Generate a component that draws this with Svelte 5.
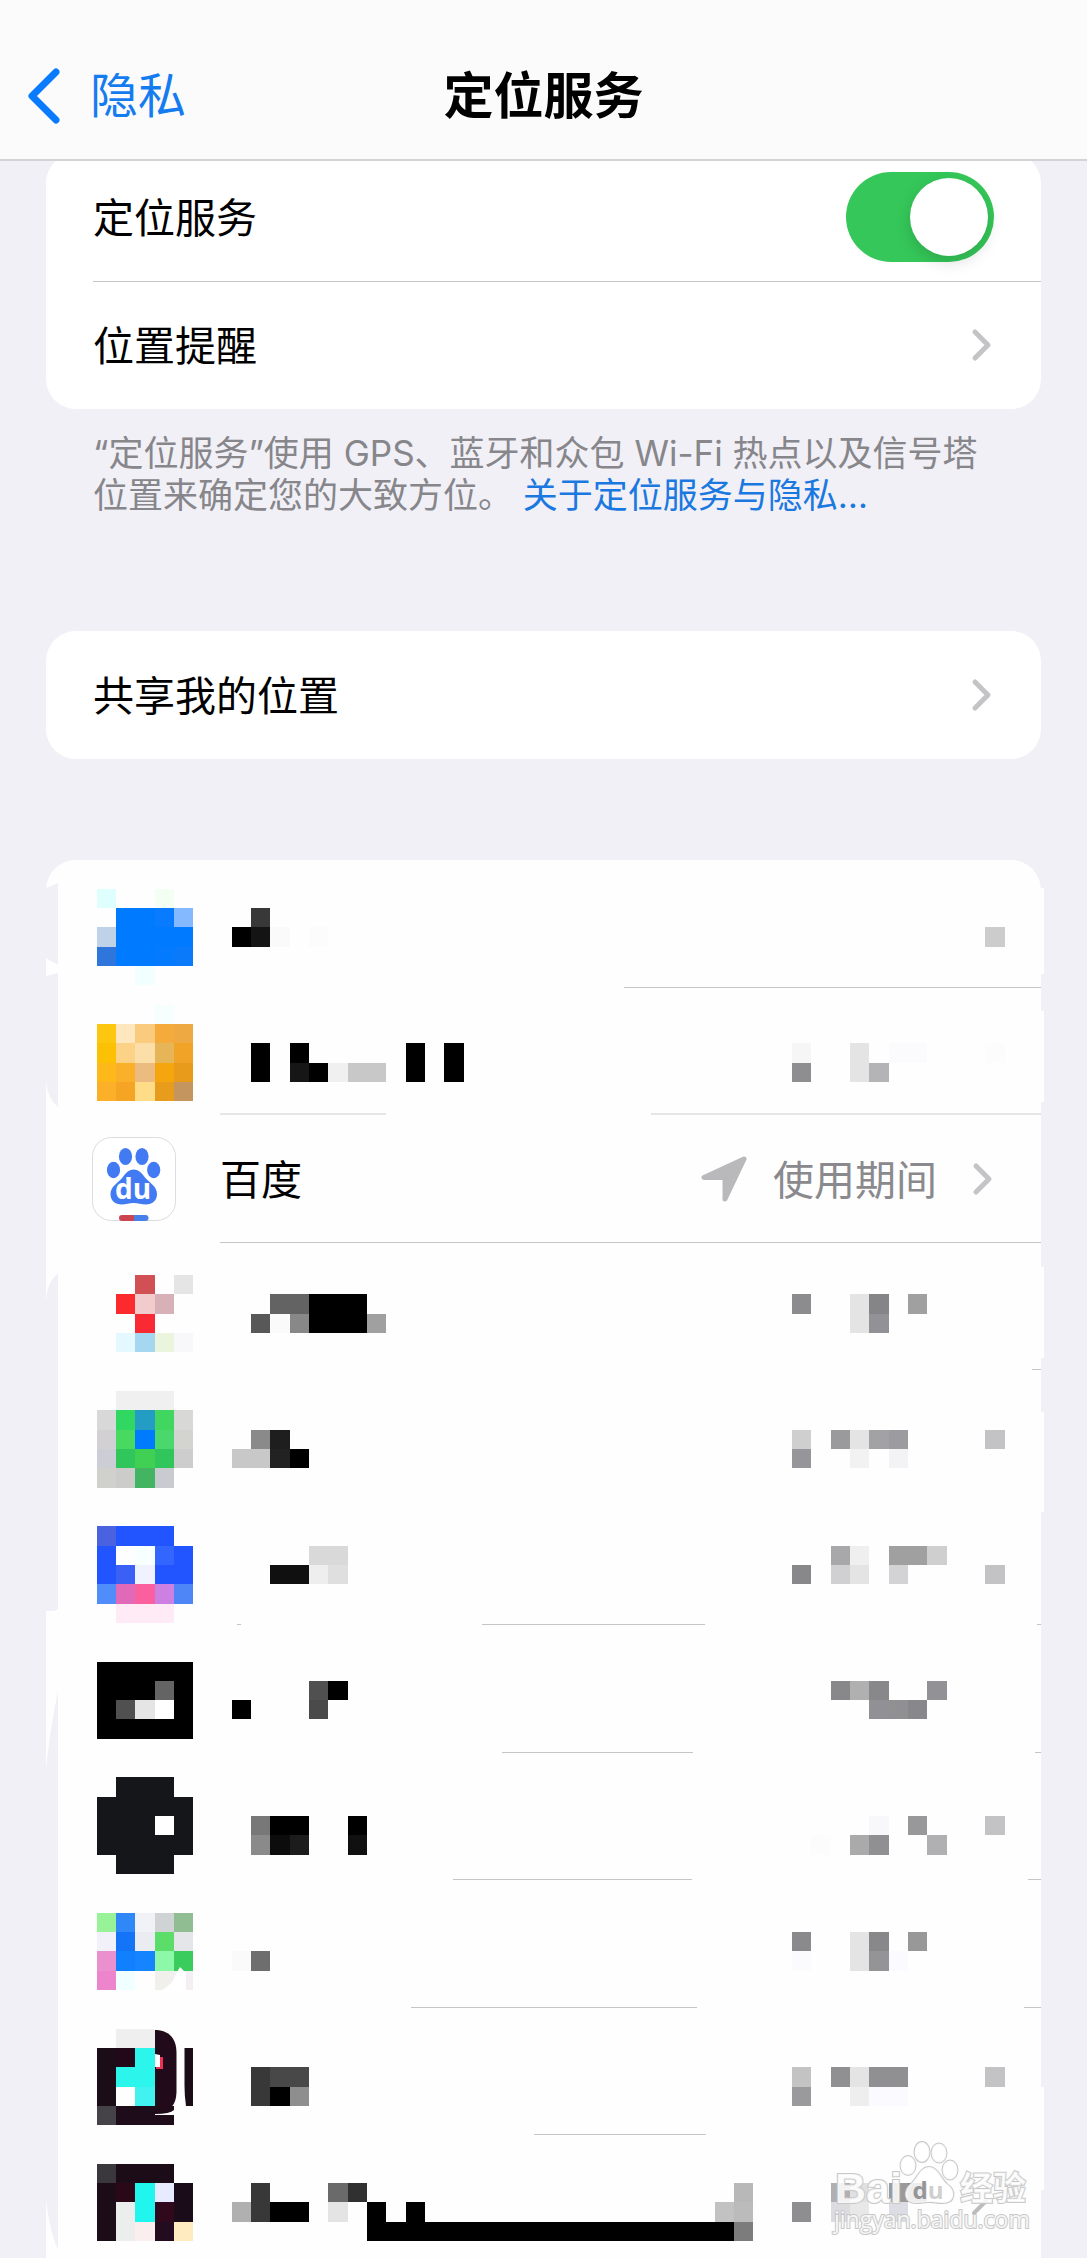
<script lang="ts">
    /* [column, row, colour, columns wide, rows high] on the mosaic grid */
    type Cell = [number, number, string, number?, number?];
    /* [from, to] along the bottom edge of the row */
    type Line = [number, number];

    interface App {
        id:      string;
        icon?:   Cell[];
        name?:   Cell[];
        status?: Cell[];
        lines:   Line[];
        soft?:   boolean;
    }

    const CELL = 19.32;
    const LIST_TOP = 860;

    let enabled = $state(true);

    const apps: App[] = [
        {
            id: 'app1',
            icon: [
                [5, 46, '#dffffe'], [8, 46, '#f3fff3'],
                [6, 47, '#007aff', 2], [8, 47, '#087bff'], [9, 47, '#85b9ff'],
                [5, 48, '#c0d2e8'], [6, 48, '#007aff', 4],
                [5, 49, '#2e75dc'], [6, 49, '#007aff', 2], [8, 49, '#047aff'], [9, 49, '#0a79fa'],
                [7, 50, '#f2ffff'],
            ],
            name: [[13, 47, '#383838'], [12, 48, '#000'], [13, 48, '#141414'], [14, 48, '#fafafa'], [16, 48, '#fcfcfc']],
            status: [[51, 48, '#ccc']],
            lines: [[578, 995]],
        },
        {
            id: 'app2',
            icon: [
                [8, 52, '#f6fffd'],
                [5, 53, '#fdc70f'], [6, 53, '#fee7be'], [7, 53, '#fbcb7d'], [8, 53, '#f4ab3c'], [9, 53, '#efa943'],
                [5, 54, '#fcc005'], [6, 54, '#fcd286'], [7, 54, '#fbdea8'], [8, 54, '#e5b558'], [9, 54, '#f0a326'],
                [5, 55, '#feb819'], [6, 55, '#fbb029'], [7, 55, '#ebbb80'], [8, 55, '#f5a60f'], [9, 55, '#e89b1b'],
                [5, 56, '#fcaf29'], [6, 56, '#f5a424'], [7, 56, '#ffdc87'], [8, 56, '#e89c1b'], [9, 56, '#c4955f'],
            ],
            name: [
                [13, 54, '#000', 1, 2], [15, 54, '#000'], [15, 55, '#161616'], [16, 55, '#000'],
                [17, 55, '#f0f0f0'], [18, 55, '#c8c8c8', 2], [21, 54, '#000', 1, 2], [23, 54, '#000', 1, 2],
            ],
            status: [
                [41, 54, '#f6f6f6'], [41, 55, '#8e8e90'], [44, 54, '#e4e4e4', 1, 2],
                [45, 55, '#b4b4b7'], [46, 54, '#fbfbfe', 2], [51, 54, '#fcfcfc'],
            ],
            lines: [[174, 340], [605, 995]],
            soft: true,
        },
        { id: 'baidu', lines: [[174, 995]] },
        {
            id: 'app4',
            icon: [
                [7, 66, '#d05054'], [9, 66, '#e5e5e5'],
                [6, 67, '#fc2a2d'], [7, 67, '#f1cccc'], [8, 67, '#d8b0b8'],
                [7, 68, '#fa2a34'],
                [6, 69, '#e4f8ff'], [7, 69, '#a5d8f0'], [8, 69, '#ebf5de'], [9, 69, '#f8f8fb'],
            ],
            name: [
                [14, 67, '#636363', 2], [16, 67, '#000', 3, 2],
                [13, 68, '#585858'], [14, 68, '#fafafa'], [15, 68, '#888'], [19, 68, '#a0a0a0'],
            ],
            status: [
                [41, 67, '#8c8c8f'], [44, 67, '#e4e4e4', 1, 2], [45, 67, '#858587'],
                [45, 68, '#929296'], [47, 67, '#a0a0a0'],
            ],
            lines: [[986, 995]],
        },
        {
            id: 'app5',
            icon: [
                [6, 72, '#eff0ef', 3],
                [5, 73, '#d8d8d8'], [6, 73, '#30d862'], [7, 73, '#249dc5'], [8, 73, '#40d660'], [9, 73, '#d8d8d6'],
                [5, 74, '#d2d0d2'], [6, 74, '#48da60'], [7, 74, '#007aff'], [8, 74, '#4ad86c'], [9, 74, '#d3d3cf'],
                [5, 75, '#cdcdd5'], [6, 75, '#30c65c'], [7, 75, '#40d054'], [8, 75, '#30c65c'], [9, 75, '#cdcdcd'],
                [5, 76, '#d0d0cc'], [6, 76, '#ccccca'], [7, 76, '#43b462'], [8, 76, '#c8cbcf'],
            ],
            name: [
                [13, 74, '#8a8a8a'], [14, 74, '#1e1e1e'],
                [12, 75, '#c8c8c8', 2], [14, 75, '#222'], [15, 75, '#000'],
            ],
            status: [
                [41, 74, '#cfcfcf'], [43, 74, '#9a9a9c'], [44, 74, '#e4e4e4'], [45, 74, '#a2a2a4'],
                [46, 74, '#9c9ca0'], [51, 74, '#c3c3c5'],
                [41, 75, '#96969a'], [44, 75, '#f2f2f2'], [46, 75, '#f3f3f6'],
            ],
            lines: [],
        },
        {
            id: 'app6',
            icon: [
                [5, 79, '#4a62e0'], [6, 79, '#2254ff', 3],
                [5, 80, '#2254ff', 1, 2], [7, 80, '#f8ffff'], [8, 80, '#3366ff'], [9, 80, '#2254ff'],
                [6, 81, '#3b60f5'], [7, 81, '#f0f2ff'], [8, 81, '#2254ff', 2],
                [5, 82, '#508cfa'], [6, 82, '#e06ab8'], [7, 82, '#fa5f9e'], [8, 82, '#cc80e2'], [9, 82, '#4f86f7'],
                [6, 83, '#ffebf6', 3],
            ],
            name: [[16, 80, '#d9d9d9', 2], [14, 81, '#101010', 2], [16, 81, '#eee'], [17, 81, '#dfdfdf']],
            status: [
                [43, 80, '#a8a8aa'], [44, 80, '#efefef'], [46, 80, '#a0a0a0', 2], [48, 80, '#cfcfcf'],
                [41, 81, '#88888a'], [43, 81, '#d0d0d2'], [44, 81, '#e4e4e4'], [46, 81, '#d3d3d5'], [51, 81, '#c3c3c5'],
            ],
            lines: [[191, 195], [436, 659], [991, 995]],
        },
        {
            id: 'app7',
            icon: [
                [5, 86, '#000', 5, 4], [8, 87, '#646464'],
                [6, 88, '#505050'], [7, 88, '#e5e5e5'], [8, 88, '#fff'],
            ],
            name: [[12, 88, '#000'], [16, 87, '#505050'], [17, 87, '#000'], [16, 88, '#4a4a4a']],
            status: [
                [43, 87, '#88888a'], [44, 87, '#b0b0b0'], [45, 87, '#88888a'], [48, 87, '#929296'],
                [45, 88, '#909095'], [46, 88, '#909092'], [47, 88, '#88888c'],
            ],
            lines: [[456, 647], [989, 995]],
        },
        {
            id: 'app8',
            icon: [[6, 92, '#141619', 3, 5], [5, 93, '#141619', 5, 3], [8, 94, '#fff']],
            name: [
                [13, 94, '#787878'], [14, 94, '#000', 2], [18, 94, '#000'],
                [13, 95, '#8a8a8a'], [14, 95, '#0c0c0c'], [15, 95, '#1c1c1c'], [18, 95, '#101010'],
            ],
            status: [
                [45, 94, '#f8f8fa'], [47, 94, '#98989a'], [51, 94, '#c3c3c5'],
                [42, 95, '#fcfcfc'], [44, 95, '#aaa'], [45, 95, '#909093'], [48, 95, '#b0b0b2'],
            ],
            lines: [[407, 646], [982, 995]],
        },
        {
            id: 'app9',
            icon: [
                [5, 99, '#98f298'], [6, 99, '#3088f8'], [7, 99, '#f0f2f8'], [8, 99, '#d0d3d3'], [9, 99, '#90be92'],
                [5, 100, '#f2f0f8'], [6, 100, '#1474f8'], [7, 100, '#ebebf2'], [8, 100, '#5cdc68'], [9, 100, '#e5e6ea'],
                [5, 101, '#ea90cf'], [6, 101, '#1080ff'], [7, 101, '#1684ff'], [8, 101, '#8cf8a8'], [9, 101, '#3acc5c'],
                [5, 102, '#ec85cb'], [6, 102, '#f0ffff'], [8, 102, '#f2f0ec'], [9, 102, '#f3eff2'],
            ],
            name: [[12, 101, '#fafafa'], [13, 101, '#6e6e6e']],
            status: [
                [41, 100, '#8a8a8c'], [44, 100, '#e4e4e4', 1, 2], [45, 100, '#88888a'], [47, 100, '#989898'],
                [41, 101, '#fbfbfe'], [45, 101, '#949497'], [46, 101, '#fafaff'],
            ],
            lines: [[365, 651], [978, 995]],
        },
        {
            id: 'app10',
            icon: [
                [6, 105, '#f0efef', 2],
                [5, 106, '#1a0d17', 1, 3], [6, 106, '#220818'], [7, 106, '#2cf5ec'],
                [6, 107, '#2cf5ec', 2], [7, 108, '#42f2f0'],
                [5, 109, '#454248'], [6, 109, '#1e0c1a', 3],
            ],
            name: [
                [13, 107, '#383838', 1, 2], [14, 107, '#484848', 2],
                [14, 108, '#000'], [15, 108, '#8e8e8e'],
            ],
            status: [
                [41, 107, '#c3c3c3'], [43, 107, '#909093'], [44, 107, '#e4e4e4'], [45, 107, '#909093', 2], [51, 107, '#c3c3c5'],
                [41, 108, '#9a9a9d'], [44, 108, '#eee'], [45, 108, '#fafaff', 2],
            ],
            lines: [[488, 660]],
        },
        {
            id: 'app11',
            icon: [
                [5, 112, '#3a383c'], [6, 112, '#1c0c18', 3],
                [5, 113, '#1c0c18', 1, 3], [6, 113, '#2a0818'], [7, 113, '#20f5ee', 1, 2], [8, 113, '#e8ebff'], [9, 113, '#1a0c18', 1, 2],
                [6, 114, '#eceeee', 1, 2], [8, 114, '#300a1c'],
                [7, 115, '#faeeee'], [8, 115, '#240c20'], [9, 115, '#ffebbf'],
            ],
            name: [
                [13, 113, '#383838', 1, 2], [17, 113, '#6a6a6a'], [18, 113, '#303030'], [38, 113, '#b8b8b8'],
                [12, 114, '#b0b0b0'], [14, 114, '#000', 2], [17, 114, '#e4e4e4'], [19, 114, '#000'], [21, 114, '#000'],
                [37, 114, '#c2c2c2'], [38, 114, '#bbb'],
                [19, 115, '#000', 19], [38, 115, '#7c7c7c'],
            ],
            status: [
                [43, 113, '#b0b0b3'], [44, 113, '#e0e0e0'], [46, 113, '#9a9a9d'], [47, 113, '#888'],
                [41, 114, '#8e8e90'], [43, 114, '#dcdce0'], [44, 114, '#e8e8e8'], [46, 114, '#dcdce4'],
            ],
            lines: [],
        },
    ];

    /* rows alternate between 128 and 127 high */
    function rowTop(i: number) {
        return LIST_TOP + Math.ceil(i * 127.5);
    }
</script>

<!--
========================================================================================================================
    //region HTML
========================================================================================================================
-->

{#snippet cells(list: Cell[])}
    {#each list as [x, y, fill, w = 1, h = 1]}
        <rect class="cell" x={x * CELL} y={y * CELL} width={w * CELL} height={h * CELL} {fill} />
    {/each}
{/snippet}

{#snippet chevron()}
    <svg class="chevron" viewBox="0 0 24 36" aria-hidden="true">
        <path d="M5 5 L18 18 L5 31" />
    </svg>
{/snippet}

<header>
    <a class="back" href="#privacy">
        <svg viewBox="0 0 36 60" aria-hidden="true"><path d="M30 6 L6 30 L30 54" /></svg>
        <span>隐私</span>
    </a>
    <h1>定位服务</h1>
</header>

<main>
    <section class="card first">
        <label class="row">
            <span class="title">定位服务</span>
            <input type="checkbox" class="switch" bind:checked={enabled} />
        </label>
        <a class="row ruled" href="#alerts">
            <span class="title">位置提醒</span>
            {@render chevron()}
        </a>
    </section>
    <p class="note">
        “定位服务”使用 GPS、蓝牙和众包 Wi-Fi 热点以及信号塔位置来确定您的大致方位。 <a href="#about">关于定位服务与隐私…</a>
    </p>

    <section class="card">
        <a class="row" href="#share">
            <span class="title">共享我的位置</span>
            {@render chevron()}
        </a>
    </section>

    <section class="list">
        <ul>
            {#each apps as app, i (app.id)}
                <li>
                    {#if app.id === 'baidu'}
                        <a class="app" href="#baidu">
                            <span class="icon">
                                <svg class="logo" viewBox="0 0 84 84" aria-hidden="true">
                                    <rect x="0.5" y="0.5" width="83" height="83" rx="19" fill="#fff" stroke="#dcdcde" />
                                    <g fill="#417af3">
                                        <ellipse cx="21.5" cy="33" rx="6.6" ry="8.2" />
                                        <ellipse cx="33.5" cy="19.5" rx="6.6" ry="8.6" />
                                        <ellipse cx="50" cy="19.5" rx="6.6" ry="8.6" />
                                        <ellipse cx="61.7" cy="33" rx="6.6" ry="8.2" />
                                        <path d="M41.7 32.6 C47 32.6 50 36.5 53 40.5 C57 45.5 65 49 65 57 C65 64 60 67.4 54 67.4 C49 67.4 46 66 41.7 66 C37 66 34 67.4 30 67.4 C23 67.4 18.5 64 18.5 57 C18.5 49 27 45.5 30.5 40.5 C33.5 36.5 36.5 32.6 41.7 32.6 Z" />
                                    </g>
                                    <text x="41" y="62" text-anchor="middle">du</text>
                                    <path d="M42 78 H30 a3 3 0 0 0 0 6 H42 Z" fill="#cc4450" />
                                    <path d="M42 78 H53.5 a3 3 0 0 1 0 6 H42 Z" fill="#4880ea" />
                                </svg>
                            </span>
                            <span class="title label">百度</span>
                            <svg class="arrow" viewBox="0 0 46 46" aria-hidden="true">
                                <path d="M43 3 L3 21.5 H24 V43 Z" />
                            </svg>
                            <span class="title value">使用期间</span>
                            {@render chevron()}
                        </a>
                    {:else}
                        <div class="app">
                            <svg class="icon" viewBox="92 {rowTop(i)} 128 124" aria-hidden="true">
                                {@render cells(app.icon ?? [])}
                                {#if app.id === 'app9'}
                                    <path d="M160 1991 Q172 1986 176 1974 L180 1967 L183 1970 L186 1973 V1992 H160 Z" fill="#fff" />
                                {:else if app.id === 'app10'}
                                    <path d="M155 2030 H157 Q176 2032 176.5 2052 V2092 Q176 2112 157 2113.5 H155 Z" fill="#210a19" />
                                    <path d="M155 2114 Q170 2114 174 2110 V2115 H155 Z" fill="#fff" />
                                    <path d="M156 2057 H163 V2069 H156 Z" fill="#ee2f55" />
                                    <path d="M155 2054 L160 2055 V2067 H155 Z" fill="#fff" />
                                    <path d="M184.5 2048 H193 V2106 H186 Q184.5 2096 184.5 2086 Z" fill="#1a0d17" />
                                {/if}
                            </svg>
                            <svg class="name" viewBox="220 {rowTop(i)} 534 124" aria-hidden="true">
                                {@render cells(app.name ?? [])}
                            </svg>
                            <svg class="status" viewBox="773 {rowTop(i)} 222 124" aria-hidden="true">
                                {@render cells(app.status ?? [])}
                            </svg>
                        </div>
                    {/if}
                    <svg class="rule" class:soft={app.soft} viewBox="0 0 995 2" preserveAspectRatio="none" aria-hidden="true">
                        {#each app.lines as [from, to]}
                            <rect x={from} y="0" width={to - from} height="2" />
                        {/each}
                    </svg>
                </li>
            {/each}
        </ul>

        <!-- uneven edges of the list -->
        <svg class="edge left" viewBox="40 860 18 1398" preserveAspectRatio="none" aria-hidden="true">
            <path d="M58 883 L46 888 V958 L58 965 Z" />
            <path d="M58 973 L46 976 V1082 Q48 1099 58 1107 Z" />
            <path d="M58 1273 Q46 1284 46 1302 V1611 H54 L58 1609 Z" />
            <path d="M58 1691 Q50 1730 46 1768 V2200 Q50 2232 58 2250 Z" />
        </svg>
        <svg class="edge right" viewBox="1041 860 3 1398" preserveAspectRatio="none" aria-hidden="true">
            <path d="M1041 888 H1044 V974 H1041 Z M1041 1011 H1044 V1102 H1041 Z M1041 1267 H1044 V1358 H1041 Z M1041 1412 H1044 V1512 H1041 Z M1041 2087 H1044 V2190 H1041 Z" />
        </svg>

        <svg class="watermark" viewBox="832 2138 200 100" aria-hidden="true">
            <path d="M974 2213 L986 2201" stroke="#bcbcbc" stroke-width="4" stroke-linecap="round" />
            <g class="mark">
                <text x="835" y="2203" class="latin">Bai</text>
                <text x="960" y="2200" class="han">经验</text>
                <ellipse cx="908" cy="2165.5" rx="7.5" ry="9.5" />
                <ellipse cx="922" cy="2152" rx="7.5" ry="10" />
                <ellipse cx="939" cy="2153" rx="7.5" ry="9.5" />
                <ellipse cx="950" cy="2170" rx="7.5" ry="9.5" />
                <path d="M929 2167 C938 2167 941 2179 947 2184 C957 2191 955 2203 943 2203 C937 2203 934 2202 929 2202 C924 2202 921 2203 916 2203 C904 2203 903 2191 911 2184 C917 2179 920 2167 929 2167 Z" />
                <text x="834" y="2228" class="url">jingyan.baidu.com</text>
            </g>
            <text x="928" y="2199" class="du" text-anchor="middle"><tspan fill="#959597">d</tspan><tspan fill="#cfcfcf">u</tspan></text>
        </svg>
    </section>
</main>

<!--
========================================================================================================================
    //region CSS
========================================================================================================================
-->

<style>
    :global(body) {
        background: #f1f0f6;
        font-family: Inter, "Noto Sans CJK SC", sans-serif;
        font-size: 41px;
        color: #000;
    }

    a { color: inherit; text-decoration: none; }

    header {
        position: relative;
        z-index: 1;
        display: grid;
        grid-template-columns: 1fr auto 1fr;
        align-items: center;
        box-sizing: border-box;
        height: 161px;
        padding: 32px 26px 0;
        background: #fbfbfb;
        border-bottom: 2px solid #d3d3d7;
    }

    .back {
        display: flex;
        align-items: center;
        gap: 28px;
        color: #157cf0;
        font-size: 48px;
        line-height: 60px;
    }

    .back svg {
        width: 36px;
        height: 60px;
        fill: none;
        stroke: #0a7aff;
        stroke-width: 7;
        stroke-linecap: round;
        stroke-linejoin: round;
    }

    h1 {
        margin: 0;
        font-size: 50px;
        line-height: 60px;
        font-weight: 700;
    }

    main { padding: 0 46px; }

    .card {
        background: #fff;
        border-radius: 30px;
    }

    .first { margin-top: -8px; }

    .row {
        position: relative;
        display: flex;
        align-items: center;
        justify-content: space-between;
        height: 128px;
        padding: 0 47px;
    }

    .title { padding-bottom: 4px; }

    .ruled::before {
        content: "";
        position: absolute;
        top: 0;
        left: 47px;
        right: 0;
        border-top: 1px solid #c6c6c8;
    }

    .switch {
        appearance: none;
        display: flex;
        align-items: center;
        box-sizing: border-box;
        width: 148px;
        height: 90px;
        margin: 0;
        padding: 6px;
        border-radius: 45px;
        background: #e9e9eb;
    }

    .switch:checked { background: #35c759; justify-content: flex-end; }

    .switch::before {
        content: "";
        width: 78px;
        height: 78px;
        border-radius: 50%;
        background: #fff;
        box-shadow: 0 6px 16px rgba(0, 0, 0, 0.15);
    }

    .chevron {
        flex: none;
        width: 24px;
        height: 36px;
        fill: none;
        stroke: #c4c4c6;
        stroke-width: 5;
        stroke-linecap: round;
        stroke-linejoin: round;
    }

    .note {
        margin: 0;
        padding: 23px 47px 115px;
        font-size: 35px;
        line-height: 42px;
        color: #86868b;
    }

    .note a { color: #1a78e0; }

    /* app list */
    .list {
        position: relative;
        margin-top: 101px;
    }

    ul {
        list-style: none;
        margin: 0;
        padding: 0;
        background: #fefefe;
        border-radius: 30px 30px 0 0;
    }

    li {
        display: flex;
        flex-direction: column;
        height: 128px;
    }

    li:nth-child(even) { height: 127px; }
    li:last-child { height: 123px; }

    .app {
        flex: 1;
        display: flex;
        align-items: flex-start;
        padding: 0 46px;
    }

    a.app { align-items: center; }

    .app svg { flex: none; }

    .icon {
        width: 128px;
        height: 124px;
        display: flex;
        align-items: center;
    }

    .name { width: 534px; height: 124px; }

    .status {
        width: 222px;
        height: 124px;
        margin-left: auto;
    }

    .icon, .name, .status { overflow: visible; }

    .cell { shape-rendering: crispEdges; }

    .logo { width: 84px; height: 84px; }

    .logo text {
        font: 700 28px "Open Sans", sans-serif;
        fill: #fff;
    }

    .label { flex: 1; }

    .arrow {
        width: 46px;
        height: 46px;
        margin-right: 26px;
        fill: #b9b9bb;
        stroke: #b9b9bb;
        stroke-width: 5;
        stroke-linejoin: round;
    }

    .value { color: #8a8a8e; margin-right: 34px; }

    .rule {
        width: 100%;
        height: 1px;
        fill: #c6c6c8;
    }

    .rule.soft { height: 2px; fill: #e6e6e8; }

    .edge {
        position: absolute;
        top: 0;
        height: 100%;
    }

    .edge.left { left: -6px; width: 18px; fill: #f1f0f6; }
    .edge.right { right: -3px; width: 3px; fill: #fefefe; }

    .watermark {
        position: absolute;
        right: 9px;
        bottom: 20px;
        width: 200px;
        height: 100px;
        overflow: visible;
    }

    .mark {
        fill: #fff;
        fill-opacity: 0.85;
        stroke: #c8c8c8;
        stroke-width: 2;
        paint-order: stroke;
    }

    .latin { font: 700 43px "Liberation Sans", sans-serif; }
    .han { font: 700 33px "Noto Sans CJK SC", sans-serif; }
    .url { font: 400 23px "Open Sans", sans-serif; }
    .du { font: 700 24px "Open Sans", sans-serif; }
</style>
